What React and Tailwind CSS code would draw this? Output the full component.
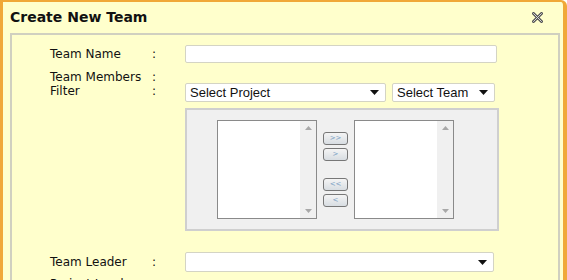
import { useState } from "react";

function Arrow() {
  return (
    <svg width="9" height="5" viewBox="0 0 9 5" className="shrink-0">
      <path d="M0 0h9L4.5 5z" fill="#111" />
    </svg>
  );
}

function FakeSelect({ value, className }) {
  return (
    <div
      className={`flex h-[19px] items-center justify-between rounded-[2px] border border-[#d4d4c4] bg-white pl-[4px] pr-[6px] font-['Liberation_Sans',Arial,sans-serif] text-[13px] text-[#111] ${className}`}
    >
      <span>{value}</span>
      <Arrow />
    </div>
  );
}

function ListBox() {
  return (
    <div className="flex h-[99px] w-[100px] border border-[#8a8a8a] bg-white">
      <div className="flex-1" />
      {/* scrollbar */}
      <div className="flex w-[16px] flex-col items-center justify-between bg-[#f0f0f0] py-[5px]">
        <svg width="7" height="4" viewBox="0 0 7 4">
          <path d="M0 4L3.5 0 7 4z" fill="#a8a8a8" />
        </svg>
        <svg width="7" height="4" viewBox="0 0 7 4">
          <path d="M0 0h7L3.5 4z" fill="#a8a8a8" />
        </svg>
      </div>
    </div>
  );
}

function MoveButton({ label, className }) {
  return (
    <button
      type="button"
      className={`flex h-[13px] w-[25px] items-center justify-center rounded-[3px] border border-[#777] bg-gradient-to-b from-[#f4f4f4] to-[#d8dde2] font-['DejaVu_Sans',Verdana,sans-serif] text-[7px] leading-none text-[#7aa0c4] ${className}`}
    >
      {label}
    </button>
  );
}

export default function App() {
  const [teamName, setTeamName] = useState("");

  return (
    <div className="h-[280px] w-[567px] overflow-hidden bg-white font-['DejaVu_Sans',Verdana,sans-serif]">
      <div className="h-[300px] rounded-tr-[6px] border-t-2 border-r-4 border-l-[3px] border-[#f0a838] bg-[#ffffcc]">
        {/* Title */}
        <div className="flex h-[31px] items-center justify-between pr-[20px] pl-[7px]">
          <h2 className="text-[14px] font-bold text-[#111]">Create New Team</h2>
          <svg width="11" height="11" viewBox="0 0 11 11" className="mb-[1px]">
            <path
              d="M1.5 1.5l8 8M9.5 1.5l-8 8"
              stroke="#555"
              strokeWidth="3"
              strokeLinecap="round"
            />
            <path
              d="M1.5 1.5l8 8M9.5 1.5l-8 8"
              stroke="#d8d8d8"
              strokeWidth="1"
              strokeLinecap="round"
            />
          </svg>
        </div>

        {/* Form box */}
        <div className="mr-[3px] ml-[7px] h-[270px] border-2 border-[#d0d0c0] pt-[10px] text-[12px] text-[#111]">
          {/* Team Name */}
          <div className="flex h-[18px] items-center">
            <span className="w-[140px] pl-[38px]">Team Name</span>
            <span className="w-[33px]">:</span>
            <input
              value={teamName}
              onChange={(e) => setTeamName(e.target.value)}
              className="h-[18px] w-[312px] rounded-[2px] border border-[#d4d4c4] bg-white outline-none"
            />
          </div>

          {/* Team Members / Filter */}
          <div className="mt-[7px] flex items-start">
            <div className="w-[140px] pl-[38px] leading-[14px]">
              <div>Team Members</div>
              <div>Filter</div>
            </div>
            <div className="w-[33px] leading-[14px]">
              <div>:</div>
              <div>:</div>
            </div>
            <div className="mt-[13px] flex gap-[6px]">
              <FakeSelect value="Select Project" className="w-[201px]" />
              <FakeSelect value="Select Team" className="w-[103px]" />
            </div>
          </div>

          {/* Member picker */}
          <div className="mt-[6px] ml-[173px] flex h-[123px] w-[314px] items-start border-2 border-[#cfcfcf] bg-[#f0f0f0] pt-[10px] pl-[30px]">
            <ListBox />
            <div className="ml-[6px] flex flex-col pt-[12px]">
              <MoveButton label=">>" />
              <MoveButton label=">" className="mt-[3px]" />
              <MoveButton label="<<" className="mt-[17px]" />
              <MoveButton label="<" className="mt-[3px]" />
            </div>
            <div className="ml-[6px]">
              <ListBox />
            </div>
          </div>

          {/* Team Leader */}
          <div className="mt-[21px] flex h-[20px] items-center">
            <span className="w-[140px] pl-[38px]">Team Leader</span>
            <span className="w-[33px]">:</span>
            <FakeSelect value="" className="h-[20px] w-[309px]" />
          </div>

          {/* Next row (cut off at the window edge) */}
          <div className="mt-[3px] flex items-center">
            <span className="w-[140px] pl-[38px]">Project Lead</span>
            <span className="w-[33px]">:</span>
          </div>
        </div>
      </div>
    </div>
  );
}
